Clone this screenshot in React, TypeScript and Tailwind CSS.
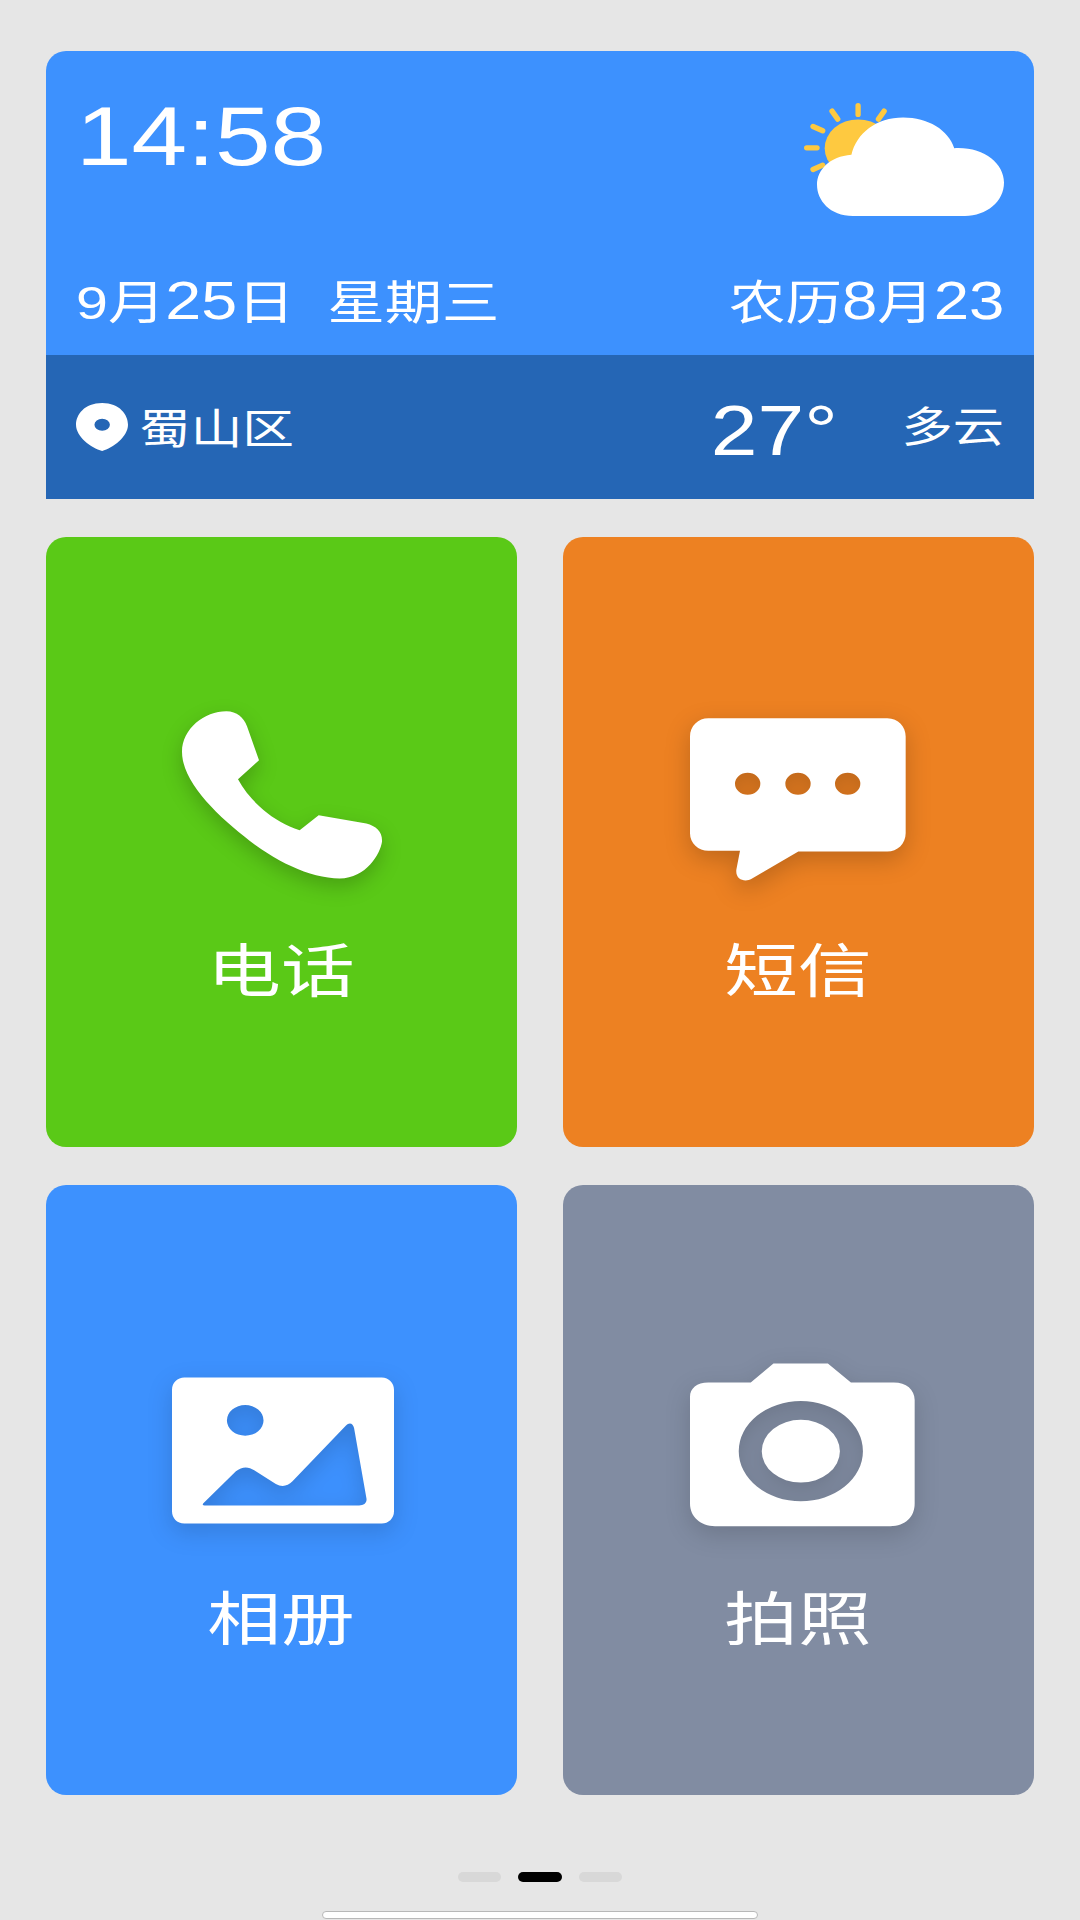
const FONT = "[font-family:'Liberation_Sans','Noto_Sans_CJK_SC',sans-serif]";

function PhoneIcon() {
  return (
    <svg width={201} height={168} viewBox="97 93 603 503" className="block translate-x-[1px] drop-shadow-[0_8px_10px_rgba(0,0,0,0.2)]">
      <path fill="#fff" d="M230 93C262 93 282 112 292 138L328 240L265 297C300 362 370 425 450 450L507 405L650 430C680 438 699 455 697 485C692 520 650 595 570 595C480 595 370 540 285 470C190 395 97 300 97 215C97 145 165 93 230 93Z" />
    </svg>
  );
}

function SmsIcon() {
  return (
    <svg width={216} height={163} viewBox="90 85 648 488" className="block translate-y-[2px] -translate-x-[1px] drop-shadow-[0_8px_12px_rgba(0,0,0,0.2)]">
      <path
        fill="#fff"
        fillRule="evenodd"
        d="M145 85H682C715 85 737 110 737 140V430C737 462 712 485 682 485H415L275 567C255 578 226 570 229 540L240 483H145C115 483 90 460 90 430V140C90 108 115 85 145 85ZM263 249A38 33 0 1 0 263 315A38 33 0 1 0 263 249ZM414 249A38 33 0 1 0 414 315A38 33 0 1 0 414 249ZM563 249A38 33 0 1 0 563 315A38 33 0 1 0 563 249Z"
      />
    </svg>
  );
}

function AlbumIcon() {
  return (
    <svg width={222} height={147} viewBox="68 83 667 439" className="block translate-x-[1px] -translate-y-[3px] drop-shadow-[0_8px_12px_rgba(0,0,0,0.15)]">
      <path
        fill="#fff"
        fillRule="evenodd"
        d="M105 83H698C720 83 735 100 735 120V485C735 507 718 522 698 522H105C83 522 68 505 68 485V120C68 98 85 83 105 83ZM288 166A55 46 0 1 0 288 258A55 46 0 1 0 288 166ZM163 460L260 365C278 350 298 350 315 362L380 403C398 413 415 410 430 395L590 228C602 216 612 222 615 235L652 445C655 460 645 468 630 468H170C160 468 158 465 163 460Z"
      />
    </svg>
  );
}

function CameraIcon() {
  return (
    <svg width={225} height={164} viewBox="90 70 674 489" className="block translate-x-[4px] drop-shadow-[0_8px_12px_rgba(0,0,0,0.15)]">
      <path
        fill="#fff"
        fillRule="evenodd"
        d="M340 70H503L572 127H700C738 127 763 148 763 180V490C763 530 735 558 690 558H165C122 558 90 530 90 490V170C90 145 110 127 145 127H272ZM422 183A186 150 0 1 0 422 483A186 150 0 1 0 422 183ZM422 239A117 94 0 1 1 422 427A117 94 0 1 1 422 239Z"
      />
    </svg>
  );
}

function WeatherIcon() {
  return (
    <svg width={200} height={113} viewBox="793 190 599 338" className="block">
      <ellipse cx="955" cy="325" rx="100" ry="86" fill="#fec940" />
      <g stroke="#fec940" strokeWidth="16" strokeLinecap="round">
        <line x1="955" y1="198" x2="955" y2="224" />
        <line x1="877" y1="214" x2="894" y2="238" />
        <line x1="1033" y1="214" x2="1016" y2="238" />
        <line x1="820" y1="260" x2="849" y2="273" />
        <line x1="801" y1="324" x2="832" y2="324" />
        <line x1="820" y1="389" x2="849" y2="376" />
      </g>
      <path fill="#fff" d="M940 528C870 528 832 480 832 435C832 390 870 350 935 345C950 280 1010 233 1090 233C1165 233 1225 270 1243 325C1330 320 1392 370 1392 428C1392 485 1340 528 1275 528Z" />
    </svg>
  );
}

function PinIcon() {
  return (
    <svg width={52} height={48} viewBox="105 1090 155 143" className="block">
      <path
        fill="#fff"
        fillRule="evenodd"
        d="M183 1090C235 1090 260 1125 260 1155C260 1190 215 1225 183 1233C150 1225 105 1190 105 1155C105 1125 130 1090 183 1090ZM183 1137A23 18 0 1 0 183 1173A23 18 0 1 0 183 1137Z"
      />
    </svg>
  );
}

function Tile({ bg, label, icon }: { bg: string; label: string; icon: React.ReactNode }) {
  return (
    <div className={`${bg} h-[610px] rounded-[20px] flex flex-col items-center`}>
      <div className="h-[342px] flex items-end justify-center">{icon}</div>
      <div className="mt-[59px] text-white text-[58px] leading-[68px] scale-x-[1.27]">{label}</div>
    </div>
  );
}

export default function App() {
  return (
    <div className={`w-[1080px] h-[1920px] overflow-hidden bg-[#e6e6e6] pt-[51px] px-[46px] ${FONT}`}>
      <div className="h-[448px] rounded-t-[20px] overflow-hidden bg-[#3d91fe] text-white flex flex-col">
        <div className="h-[304px] px-[30px] flex flex-col justify-between pb-[22px]">
          <div className="flex justify-between items-start pt-[43px]">
            <div className="text-[84px] leading-none origin-left scale-x-[1.19]">14:58</div>
            <div className="mt-[9px]">
              <WeatherIcon />
            </div>
          </div>
          <div className="flex justify-between items-end text-[47px] leading-[60px]">
            <div className="origin-left scale-x-[1.22] whitespace-pre">
              9月<span className="text-[53px]">25</span>日<span className="ml-[27px]">星期三</span>
            </div>
            <div className="origin-right scale-x-[1.2] whitespace-pre">
              农历<span className="text-[53px]">8</span>月<span className="text-[53px]">23</span>
            </div>
          </div>
        </div>
        <div className="h-[144px] px-[30px] bg-[#2566b5] flex items-center justify-between">
          <div className="flex items-center">
            <PinIcon />
            <div className="ml-[11px] text-[42px] leading-none origin-left scale-x-[1.23] translate-y-[3px]">蜀山区</div>
          </div>
          <div className="flex items-center">
            <div className="text-[70px] leading-none origin-right scale-x-[1.2] translate-y-[4px]">27°</div>
            <div className="ml-[82px] text-[42px] leading-none origin-right scale-x-[1.22] translate-y-[1px]">多云</div>
          </div>
        </div>
      </div>
      <div className="mt-[38px] grid grid-cols-2 gap-x-[46px] gap-y-[38px]">
        <Tile bg="bg-[#5ac917]" label="电话" icon={<PhoneIcon />} />
        <Tile bg="bg-[#ed8122]" label="短信" icon={<SmsIcon />} />
        <Tile bg="bg-[#3d91fe]" label="相册" icon={<AlbumIcon />} />
        <Tile bg="bg-[#818ca2]" label="拍照" icon={<CameraIcon />} />
      </div>
      <div className="mt-[77px] flex justify-center gap-[17px]">
        <div className="w-[43px] h-[10px] rounded-full bg-[#d8d8d8]" />
        <div className="w-[44px] h-[10px] rounded-full bg-black" />
        <div className="w-[43px] h-[10px] rounded-full bg-[#d8d8d8]" />
      </div>
      <div className="mt-[29px] mx-auto w-[436px] h-[8px] rounded-full bg-white border border-[#b8b8b8]" />
    </div>
  );
}
